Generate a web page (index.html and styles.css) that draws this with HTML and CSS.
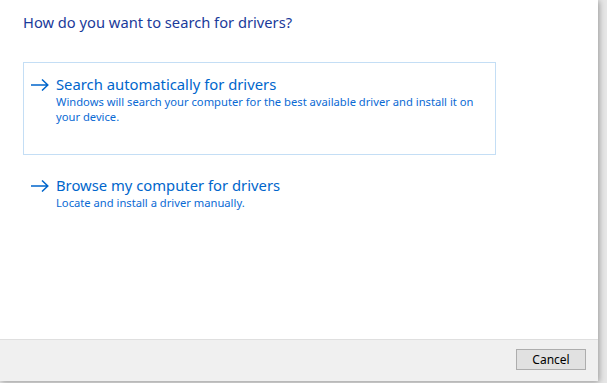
FILE: index.html
```html
<!DOCTYPE html>
<html lang="en">

<head>
    <meta charset="UTF-8">
    <title>Update Drivers</title>
    <link rel="stylesheet" href="styles.css">
</head>

<body>
    <div class="window">
        <div class="content">
            <h1>How do you want to search for drivers?</h1>

            <div class="option selected">
                <svg class="arrow" width="18" height="12" viewBox="0 0 18 12">
                    <path d="M0 6 H17 M11 0.5 L16.8 6 L11 11.5" fill="none" stroke="#0066cc" stroke-width="1.5"/>
                </svg>
                <div class="option-text">
                    <div class="option-title">Search automatically for drivers</div>
                    <div class="option-desc">Windows will search your computer for the best available driver and install it on your device.</div>
                </div>
            </div>

            <div class="option">
                <svg class="arrow" width="18" height="12" viewBox="0 0 18 12">
                    <path d="M0 6 H17 M11 0.5 L16.8 6 L11 11.5" fill="none" stroke="#0066cc" stroke-width="1.5"/>
                </svg>
                <div class="option-text">
                    <div class="option-title">Browse my computer for drivers</div>
                    <div class="option-desc">Locate and install a driver manually.</div>
                </div>
            </div>
        </div>

        <div class="footer">
            <button class="btn">Cancel</button>
        </div>
    </div>
</body>

</html>
```

FILE: styles.css
```css
* {
    box-sizing: border-box;
    margin: 0;
    padding: 0;
}

body {
    font-family: 'Noto Sans', 'Open Sans', sans-serif;
    background: #e6e6e6;
    width: 607px;
    height: 383px;
    overflow: hidden;
}

.window {
    width: 598px;
    height: 381px;
    background: #fff;
    display: flex;
    flex-direction: column;
    box-shadow: 1px 1px 6px rgba(0, 0, 0, 0.35);
}

.content {
    flex: 1;
    padding: 12px 23px 0;
}

h1 {
    font-size: 14.7px;
    font-weight: 400;
    line-height: 20px;
    color: #1a3a9a;
    margin-bottom: 30px;
}

.option {
    display: flex;
    align-items: flex-start;
    width: 473px;
    height: 93px;
    padding: 11px 7px;
    border: 1px solid transparent;
    margin-bottom: 8px;
}

.option.selected {
    border-color: #c4def5;
}

.arrow {
    flex-shrink: 0;
    margin-top: 5px;
    margin-right: 7px;
}

.option-title {
    font-size: 14.8px;
    line-height: 20px;
    color: #0066cc;
}

.option-desc {
    font-size: 11.2px;
    line-height: 15px;
    color: #0a6ad4;
}

.footer {
    height: 42px;
    background: #f0f0f0;
    border-top: 1px solid #dfdfdf;
    display: flex;
    justify-content: flex-end;
    padding: 9px 12px 0 0;
}

.btn {
    width: 70px;
    height: 21px;
    background: #e1e1e1;
    border: 1px solid #adadad;
    font-family: 'Noto Sans', 'Open Sans', sans-serif;
    font-size: 12px;
    color: #000;
}
```
